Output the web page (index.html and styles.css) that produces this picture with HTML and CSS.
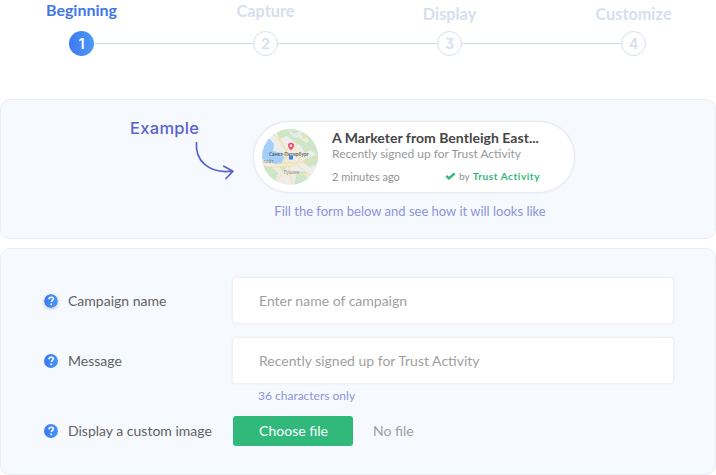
FILE: index.html
```html
<!DOCTYPE html>
<html lang="en">
<head>
<meta charset="utf-8">
<title>Campaign setup</title>
<link rel="stylesheet" href="styles.css">
</head>
<body>
<svg class="defs" width="0" height="0">
  <defs>
    <linearGradient id="blue" x1="0" x2="1" y1="0" y2="0"><stop offset="0" stop-color="#3f78f2"/><stop offset="1" stop-color="#4698f8"/></linearGradient>
    <symbol id="help" viewBox="0 0 14 14"><circle cx="7" cy="7" r="7" fill="url(#blue)"/><path d="M4.9 5.4C5 3.9 6 3.3 7.1 3.3c1.2 0 2.2.6 2.2 1.7 0 1.3-2 1.5-2 3.1" fill="none" stroke="#fff" stroke-width="1.4"/><circle cx="7.2" cy="10.3" r=".95" fill="#fff"/></symbol>
  </defs>
</svg>
<nav class="steps">
  <div class="step active"><span class="label">Beginning</span><span class="dot">1</span></div>
  <div class="step second"><span class="label">Capture</span><span class="dot">2</span></div>
  <div class="step low"><span class="label">Display</span><span class="dot">3</span></div>
  <div class="step low"><span class="label">Customize</span><span class="dot">4</span></div>
</nav>
<section class="panel preview">
  <div class="example">
    <span>Example</span>
    <svg class="arrow" width="42" height="42" viewBox="0 0 42 42" fill="none" stroke="#5963cb" stroke-width="1.7" stroke-linecap="round" stroke-linejoin="round"><path d="M2.5 2.5C1 20 14 34 38 31.2M29.8 26.2L39 31.2L32 38.5"/></svg>
  </div>
  <div class="demo">
    <article class="card">
      <svg class="map" width="56" height="56" viewBox="0 0 56 56">
        <clipPath id="round"><circle cx="28" cy="28" r="28"/></clipPath>
        <g clip-path="url(#round)">
          <rect width="56" height="56" fill="#ededeb"/>
          <path d="M14 0H56V26L48 21L43 24L39 17L31 12L25 7L17 10ZM43 30L56 25V35L47 38L42 34ZM0 36L10 38L16 44L13 52L21 56H0ZM35 42L44 43L47 56H32ZM17 38L24 37L22 44Z" fill="#cbe6c8"/>
          <path d="M25 0L32 5L38 2L42 10L46 9L47 13L44 14L37 9L31 8Z" fill="#e8ece5"/>
          <path d="M0 9L8 10L12 15L11 22L20 24L22 29L20 34L13 35L6 32L0 30Z" fill="#a5cffb"/>
          <g fill="none" stroke="#f8dc94" stroke-width=".9"><path d="M11 5L20 14L25 24L22 32L27 38L34 35L38 29L33 20L26 19L23 24L25 31L30 35M12 36L24 34L43 33L56 29M25 37L18 48L9 56M27 38L30 56M34 35L45 44L53 51M31 20L38 11L49 4M23 20L18 10L21 0M38 29L50 39M1 39L13 38L25 37"/></g>
          <g fill="none" stroke="#fae9bb" stroke-width=".8"><path d="M32 12L35 20L46 26M18 48L34 45L48 46M8 44L20 40M43 5L44 17L52 23"/></g>
          <path d="M27 26.5H31V30.5H27Z" fill="#397df4"/>
          <path d="M29 21.4C27 19 26 17.8 26 16.8a3 3 0 0 1 6 0c0 1-1 2.2-3 4.6Z" fill="#f0416a"/><circle cx="29" cy="16.8" r="1.3" fill="#fff"/>
          <text x="7" y="26.6" textLength="40" lengthAdjust="spacingAndGlyphs" class="city">Санкт-Петербург</text>
          <text x="1" y="34" class="place">лофт</text>
          <text x="22" y="45.2" class="place" textLength="15" lengthAdjust="spacingAndGlyphs">Пушкин</text>
        </g>
      </svg>
      <div class="card-text">
        <strong>A Marketer from Bentleigh East...</strong>
        <p>Recently signed up for Trust Activity</p>
        <div class="meta">
          <span class="time">2 minutes ago</span>
          <span class="by"><svg width="11" height="8" viewBox="0 0 11 8"><path d="M1.2 3.9L4 6.4L9.7 1.3" fill="none" stroke="#2fb879" stroke-width="2.3"/></svg><span>by</span><b>Trust Activity</b></span>
        </div>
      </div>
    </article>
    <p class="hint">Fill the form below and see how it will looks like</p>
  </div>
</section>
<form class="panel form">
  <div class="row">
    <svg class="help raised" width="14" height="14"><use href="#help"/></svg>
    <label for="name">Campaign name</label>
    <input id="name" type="text" placeholder="Enter name of campaign">
  </div>
  <div class="row message">
    <svg class="help" width="14" height="14"><use href="#help"/></svg>
    <label for="message">Message</label>
    <input id="message" type="text" placeholder="Recently signed up for Trust Activity">
  </div>
  <p class="limit">36 characters only</p>
  <div class="row upload">
    <svg class="help" width="14" height="14"><use href="#help"/></svg>
    <span class="name">Display a custom image</span>
    <div class="file"><button type="button">Choose file</button><span>No file</span></div>
  </div>
</form>
</body>
</html>
```
FILE: styles.css
```css
* { box-sizing: border-box; }
body { margin: 0; width: 716px; height: 475px; overflow: hidden; background: #fff; font-family: Lato, sans-serif; color: #626262; }
p { margin: 0; }
.defs { position: absolute; }

.steps { display: grid; grid-template-columns: repeat(4, 184px); margin-left: -10.5px; height: 99px; }
.step { position: relative; display: flex; flex-direction: column; align-items: center; color: #d6dfef; }
.label { height: 31px; font-size: 16.2px; line-height: 20px; font-weight: 700; letter-spacing: .05px; }
.second .label { padding-top: 1px; }
.low .label { padding-top: 4px; }
.dot { display: flex; align-items: center; justify-content: center; width: 25px; height: 25px; border: 1px solid #d6dfef; border-radius: 50%; font: 600 14.5px/23px Inter, sans-serif; font-feature-settings: "cv09"; }
.active .label { font-size: 16px; color: #4277e8; letter-spacing: 0; }
.active .dot { border: 0; color: #fff; background: linear-gradient(90deg, #3f78f2, #4a9af8); }
.step:not(:last-child)::after { content: ""; position: absolute; left: 104.5px; top: 43px; width: 159px; height: 1px; background: #d0dce9; }

.panel { background: #f6f9fe; border: 1px solid #e9eef5; border-radius: 10px; }
.preview { display: flex; height: 140px; padding: 18px 0 0 129px; }
.example { width: 122px; color: #5963cb; font: 500 16.5px/20px Inter, sans-serif; }
.example span { display: block; letter-spacing: .3px; }
.arrow { display: block; margin: 2px 0 0 64px; }
.demo { width: 324px; padding-top: 4px; }
.card { display: flex; width: 320px; height: 70px; margin: 0 0 0 2px; padding: 7px 0 0 8px; background: #fff; border-radius: 36px; box-shadow: 0 0 2px 1px #e0e5eb; }
.map { flex: none; }
.city { font: 600 5.3px "Open Sans", sans-serif; fill: #555; }
.place { font: 4.5px "Open Sans", sans-serif; fill: #777; }
.card-text { width: 208px; margin-left: 14px; white-space: nowrap; }
.card-text strong { display: block; font-size: 14px; line-height: 18px; letter-spacing: .03px; color: #464646; }
.card-text p { font-size: 12px; line-height: 14px; color: #999; }
.meta { display: flex; justify-content: space-between; margin-top: 9px; font-size: 11px; line-height: 14px; color: #929292; }
.by { display: flex; align-items: center; gap: 3px; font-size: 10px; position: relative; top: -1px; }
.by b { color: #2fb879; letter-spacing: .57px; }
.hint { margin: 10px 8px 0 0; text-align: center; font-size: 13px; line-height: 18px; color: #8b94dc; white-space: nowrap; }

.form { height: 227px; margin-top: 9px; padding: 28px 41px 0 43px; }
.row { display: grid; grid-template-columns: 14px 164px 442px; align-items: center; column-gap: 0; height: 48px; font-size: 14px; }
.message { margin-top: 12px; }
.row label, .name { padding-left: 10px; line-height: 18px; }
.row input { align-self: start; width: 442px; height: 47px; padding: 0 26px; border: 1px solid #edf1f5; border-radius: 4px; background: #fff; box-shadow: 0 0 2px #e7edf3; font: 14px Lato, sans-serif; letter-spacing: 0; margin-left: 10px; }
.row input::placeholder { color: #a0a0a0; opacity: 1; }
.raised { border-radius: 50%; box-shadow: 0 1px 3px #b9c0cc; }
.limit { margin-left: 214px; height: 31px; padding-top: 2px; font-size: 12px; line-height: 18px; color: #8b94dc; }
.upload { height: 30px; }
.file { display: flex; align-items: center; gap: 20px; margin-left: 11px; color: #a0a0a0; line-height: 18px; }
.file span { padding-bottom: 1px; }
.file button { width: 120px; height: 30px; padding: 0 0 2px 1px; border: 0; border-radius: 3px; background: #30b97b; color: #fff; font: 14px Lato, sans-serif; }
```
